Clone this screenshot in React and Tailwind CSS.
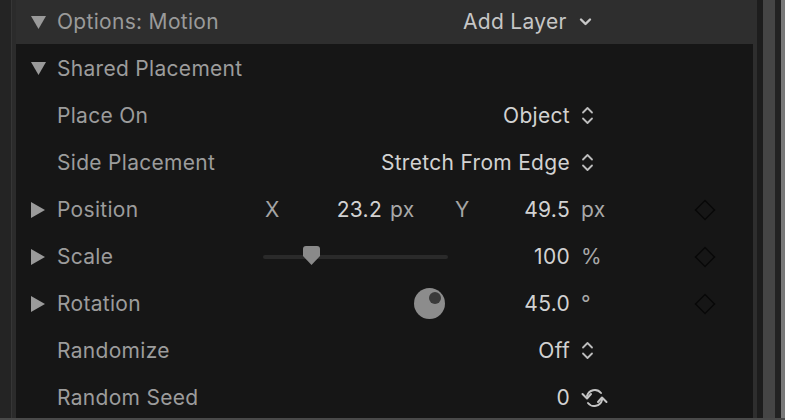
import React from 'react';

const font = { fontFamily: 'Inter, "Noto Sans", sans-serif' };

function TriDown() {
  return (
    <svg width="15" height="13" viewBox="0 0 15 13" className="shrink-0">
      <path d="M0 0 H15 L7.5 13 Z" fill="#9a9a9a" />
    </svg>
  );
}

function TriRight() {
  return (
    <svg width="14" height="16" viewBox="0 0 14 16" className="shrink-0">
      <path d="M0 0 L14 8 L0 16 Z" fill="#9a9a9a" />
    </svg>
  );
}

function UpDown() {
  return (
    <svg width="13" height="21" viewBox="0 0 13 21" className="shrink-0">
      <path d="M2 7.5 L6.5 3 L11 7.5 M2 13.5 L6.5 18 L11 13.5" fill="none" stroke="#bdbdbd" strokeWidth="1.8" strokeLinecap="round" strokeLinejoin="round" />
    </svg>
  );
}

function Chevron() {
  return (
    <svg width="13" height="10" viewBox="0 0 13 10" className="shrink-0">
      <path d="M2 2.5 L6.5 7 L11 2.5" fill="none" stroke="#c8c8c8" strokeWidth="2.4" strokeLinecap="round" strokeLinejoin="round" />
    </svg>
  );
}

function Diamond() {
  return (
    <svg width="22" height="22" viewBox="0 0 22 22">
      <path d="M11 1.5 L20.5 11 L11 20.5 L1.5 11 Z" fill="none" stroke="#080808" strokeWidth="1.5" />
    </svg>
  );
}

function Reset() {
  return (
    <svg width="27" height="24" viewBox="0 0 27 24" className="shrink-0">
      <path d="M6 10 A8 8 0 0 1 20 7" fill="none" stroke="#c4c4c4" strokeWidth="2" strokeLinecap="round" />
      <path d="M21 14 A8 8 0 0 1 7 17" fill="none" stroke="#c4c4c4" strokeWidth="2" strokeLinecap="round" />
      <path d="M1.5 8 L6 12.5 L10 8" fill="none" stroke="#c4c4c4" strokeWidth="2" strokeLinecap="round" strokeLinejoin="round" />
      <path d="M17 16 L21 11.5 L25.5 16" fill="none" stroke="#c4c4c4" strokeWidth="2" strokeLinecap="round" strokeLinejoin="round" />
    </svg>
  );
}

function Row({ arrow, label, children, unit, keyframe }) {
  return (
    <div className="flex h-[47px] items-center">
      <div className="flex w-[41px] shrink-0 justify-start pl-[15px]">
        {arrow === 'down' && <TriDown />}
        {arrow === 'right' && <TriRight />}
      </div>
      <div className="w-[206px] shrink-0 text-[#9c9c9c]">{label}</div>
      <div className="flex w-[307px] shrink-0 items-center justify-end text-[#d2d2d2]">{children}</div>
      <div className="flex w-[120px] shrink-0 items-center pl-[11px] text-[#a9a9a9]">{unit}</div>
      <div className="flex w-[30px] justify-center">{keyframe && <Diamond />}</div>
    </div>
  );
}

export default function App() {
  return (
    <div className="flex h-[420px] w-[785px] flex-col overflow-hidden bg-[#161616] text-[21px] tracking-[0.3px]" style={font}>
      <div className="flex h-[418px]">
        <div className="w-[11px] bg-[#242424]" />
        <div className="w-[1px] bg-[#363636]" />
        <div className="w-[4px] bg-[#2b2b2b]" />

        <div className="flex w-[741px] flex-col bg-[#2e2e2e]">
          {/* Header */}
          <div className="flex h-[44px] shrink-0 items-center">
            <div className="flex w-[41px] justify-start pl-[15px]">
              <TriDown />
            </div>
            <div className="flex-1 text-[#9a9a9a]">Options: Motion</div>
            <div className="flex w-[300px] items-center gap-[12px] pl-[6px] text-[#c6c6c6]">
              <span>Add Layer</span>
              <Chevron />
            </div>
          </div>

          {/* Body */}
          <div className="mr-[4px] flex-1 bg-[#161616] pt-[1px]">
            <div className="flex h-[47px] items-center">
              <div className="flex w-[41px] justify-start pl-[15px]">
                <TriDown />
              </div>
              <div className="text-[#9c9c9c]">Shared Placement</div>
            </div>

            <Row label="Place On" unit={<UpDown />}>
              <span>Object</span>
            </Row>

            <Row label="Side Placement" unit={<UpDown />}>
              <span>Stretch From Edge</span>
            </Row>

            <Row arrow="right" label="Position" unit="px" keyframe>
              <div className="flex w-[119px] justify-between pl-[2px]">
                <span className="text-[#a4a4a4]">X</span>
                <span>23.2</span>
              </div>
              <div className="w-[73px] pl-[8px] text-[#a9a9a9]">px</div>
              <div className="flex flex-1 justify-between">
                <span className="text-[#a4a4a4]">Y</span>
                <span>49.5</span>
              </div>
            </Row>

            <Row arrow="right" label="Scale" unit="%" keyframe>
              <div className="relative mr-auto h-[20px] w-[185px]">
                <div className="absolute left-0 right-0 top-[8px] h-[4px] rounded-full bg-[#2a2a2a]" />
                <svg width="17" height="19" viewBox="0 0 17 19" className="absolute left-[40px] top-[-1px]">
                  <path d="M0 3 Q0 0 3 0 H14 Q17 0 17 3 V10 L8.5 19 L0 10 Z" fill="#8a8a8a" />
                </svg>
              </div>
              <span>100</span>
            </Row>

            <Row arrow="right" label="Rotation" unit="°" keyframe>
              <div className="relative ml-[151px] mr-auto h-[31px] w-[31px] rounded-full bg-[#8c8c8c]">
                <div className="absolute left-[15px] top-[4px] h-[12px] w-[12px] rounded-full bg-[#3a3a3a]" />
              </div>
              <span>45.0</span>
            </Row>

            <Row label="Randomize" unit={<UpDown />}>
              <span>Off</span>
            </Row>

            <Row label="Random Seed" unit={<Reset />}>
              <span>0</span>
            </Row>
          </div>
        </div>

        <div className="w-[6px] bg-[#1d1d1d]" />
        <div className="w-[12px] bg-[#454545]" />
        <div className="w-[6px] bg-[#222222]" />
        <div className="w-[4px] bg-[#787878]" />
      </div>
      <div className="h-[2px] bg-[#4a4a4a]" />
    </div>
  );
}
